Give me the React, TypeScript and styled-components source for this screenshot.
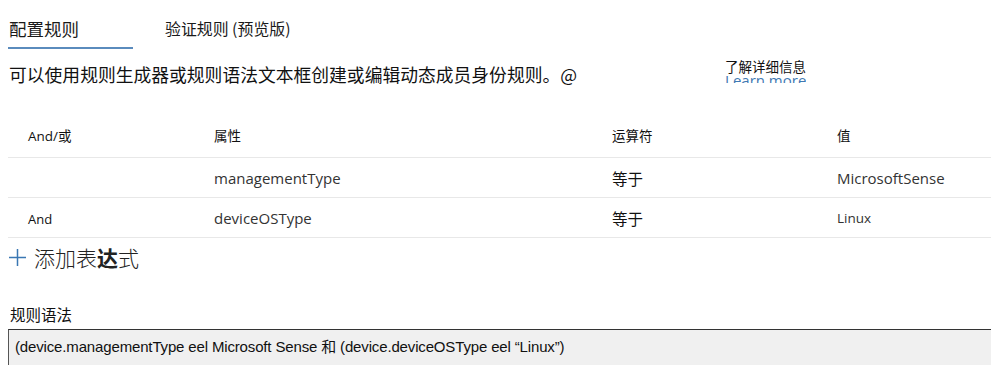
import React, { ReactElement } from 'react';
import styled, { createGlobalStyle } from 'styled-components';

const GlobalStyle = createGlobalStyle`
  body {
    margin: 0;
    background: #fff;
    font-family: 'Noto Sans CJK SC', 'Noto Sans', sans-serif;
    color: #111;
  }
`;

type Rule = {
  andOr: string;
  property: string;
  operator: string;
  value: string;
  valueSmall?: boolean;
};

const rules: Rule[] = [
  { andOr: '', property: 'managementType', operator: '等于', value: 'MicrosoftSense' },
  { andOr: 'And', property: 'deviceOSType', operator: '等于', value: 'Linux', valueSmall: true },
];

export default function App(): ReactElement {
  return (
    <Page>
      <GlobalStyle />
      <Tabs>
        <Tab active>配置规则</Tab>
        <Tab>验证规则 (预览版)</Tab>
      </Tabs>

      <Intro>
        <span>可以使用规则生成器或规则语法文本框创建或编辑动态成员身份规则。@</span>
        <LearnMore>
          <span>了解详细信息</span>
          <span className="en">Learn more</span>
        </LearnMore>
      </Intro>

      <Table>
        <HeaderRow>
          <HeadCell>And/或</HeadCell>
          <HeadCell>属性</HeadCell>
          <HeadCell>运算符</HeadCell>
          <HeadCell>值</HeadCell>
        </HeaderRow>
        {rules.map((rule) => (
          <BodyRow key={rule.property}>
            <AndCell>{rule.andOr}</AndCell>
            <LatinCell>{rule.property}</LatinCell>
            <OpCell>{rule.operator}</OpCell>
            <LatinCell small={rule.valueSmall}>{rule.value}</LatinCell>
          </BodyRow>
        ))}
      </Table>

      <AddButton>
        <svg width="19" height="19" viewBox="0 0 19 19">
          <path d="M9.5 1v17M1 9.5h17" stroke="#3a77b3" strokeWidth="1.5" fill="none" />
        </svg>
        <span>
          添加表<b>达</b>式
        </span>
      </AddButton>

      <SyntaxLabel>规则语法</SyntaxLabel>
      <SyntaxBox>(device.managementType eel Microsoft Sense 和 (device.deviceOSType eel “Linux”)</SyntaxBox>
    </Page>
  );
}

const Page = styled.div`
  width: 991px;
  height: 365px;
  overflow: hidden;
  padding-left: 8px;
  box-sizing: border-box;
`;

const Tabs = styled.div`
  display: flex;
  gap: 32px;
  align-items: flex-start;
  padding-top: 16px;
`;

const Tab = styled.div<{ active?: boolean }>`
  font-size: ${(p) => (p.active ? '17.5px' : '15.9px')};
  line-height: 26px;
  height: 33px;
  padding-left: ${(p) => (p.active ? '1px' : '0')};
  width: ${(p) => (p.active ? '125px' : 'auto')};
  box-sizing: border-box;
  color: #1a1a1a;
  border-bottom: 2px solid ${(p) => (p.active ? '#5a8bbd' : 'transparent')};
`;

const Intro = styled.div`
  display: flex;
  align-items: flex-start;
  margin-top: 12px;
  font-size: 17.8px;
  line-height: 26px;
  height: 34px;
  padding-left: 1px;
  color: #111;
`;

const LearnMore = styled.div`
  display: flex;
  flex-direction: column;
  margin-left: 148px;
  margin-top: -3px;
  height: 25px;
  overflow: hidden;

  & span {
    font-size: 13.5px;
    line-height: 17px;
    color: #111;
  }

  & .en {
    font-family: 'Open Sans', sans-serif;
    color: #3f79b3;
    font-size: 15px;
    line-height: 14px;
    margin-top: -2px;
  }
`;

const Table = styled.div`
  margin-top: 18px;
`;

const HeaderRow = styled.div`
  display: grid;
  grid-template-columns: 186px 398px 225px 1fr;
  padding-left: 20px;
  height: 44px;
  align-items: center;
  border-bottom: 1px solid #e8e8e8;
`;

const BodyRow = styled(HeaderRow)`
  height: 39px;
`;

const HeadCell = styled.div`
  font-size: 13.5px;
  color: #111;
  font-family: 'Open Sans', 'Noto Sans CJK SC', sans-serif;
`;

const AndCell = styled.div`
  font-size: 13px;
  color: #111;
  font-family: 'Open Sans', sans-serif;
  padding-top: 3px;
`;

const LatinCell = styled.div<{ small?: boolean }>`
  font-family: 'Open Sans', sans-serif;
  font-size: ${(p) => (p.small ? '13.5px' : '15px')};
  color: #333;
`;

const OpCell = styled.div`
  font-size: 15.5px;
  color: #111;
`;

const AddButton = styled.div`
  display: flex;
  align-items: center;
  gap: 7px;
  margin-top: 4px;
  font-size: 21px;
  font-weight: 300;
  color: #222;

  & svg {
    flex: none;
  }

  & b {
    font-weight: 700;
  }
`;

const SyntaxLabel = styled.div`
  margin-top: 32px;
  padding-left: 2px;
  font-size: 15.5px;
  line-height: 20px;
  color: #111;
`;

const SyntaxBox = styled.div`
  margin-top: 5px;
  height: 40px;
  background: #f0f0f0;
  border-top: 1px solid #333;
  border-left: 1px solid #555;
  padding: 5px 0 0 6px;
  box-sizing: border-box;
  font-family: 'Liberation Sans', 'Noto Sans CJK SC', sans-serif;
  font-size: 15px;
  letter-spacing: -0.15px;
  color: #111;
`;
